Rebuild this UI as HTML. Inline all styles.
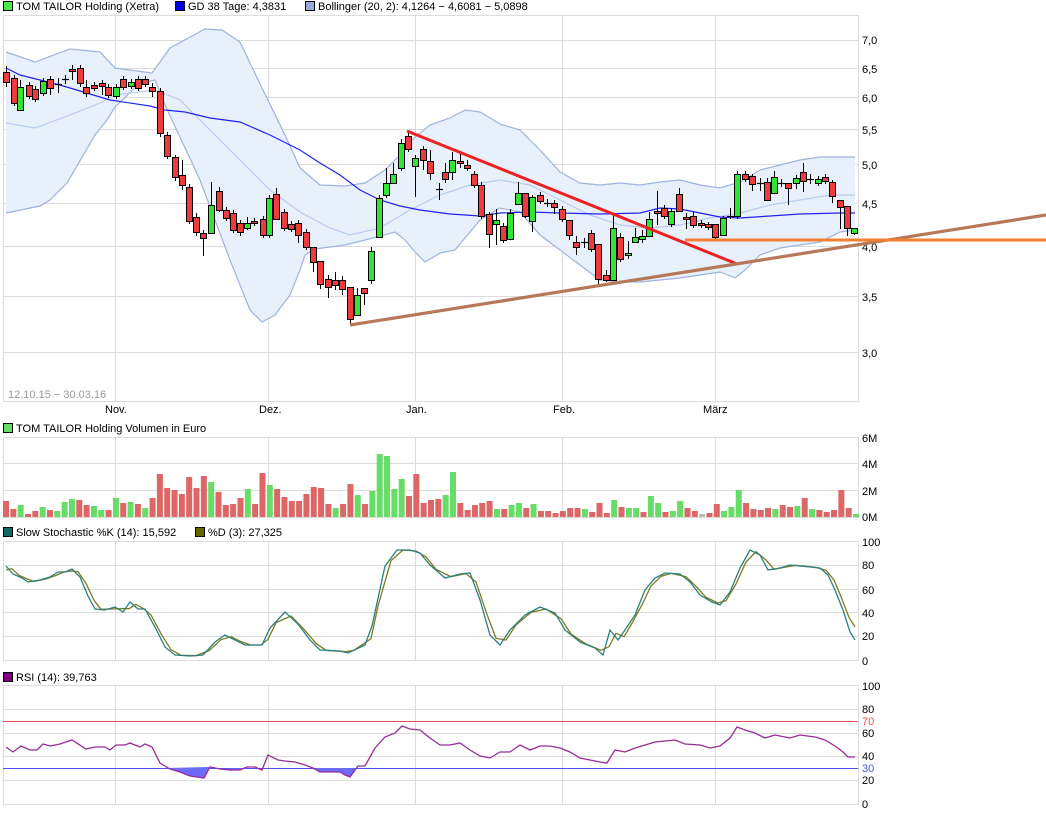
<!DOCTYPE html>
<html><head><meta charset="utf-8"><style>
body{margin:0;background:#fff;width:1046px;height:814px;overflow:hidden}
svg{display:block;font-family:"Liberation Sans",sans-serif;font-size:11px}
</style></head><body>
<svg id="s" width="1046" height="814" xmlns="http://www.w3.org/2000/svg">
<g id="grid" stroke="#dcdcdc" stroke-width="1" fill="none" shape-rendering="crispEdges">
<rect x="3.5" y="15.5" width="855" height="386"/>
<path d="M3 40.5H858M3 68.5H858M3 97.5H858M3 129.5H858M3 164.5H858M3 203.5H858M3 246.5H858M3 296.5H858M3 352.5H858"/>
<path d="M115.5 15V401M268.5 15V401M415.5 15V401M562.5 15V401M715.5 15V401"/>
<rect x="3.5" y="437.5" width="855" height="80"/>
<path d="M3 463.5H858M3 490.5H858M115.5 437V517M268.5 437V517M415.5 437V517M562.5 437V517M715.5 437V517"/>
<rect x="3.5" y="541.5" width="855" height="119"/>
<path d="M3 565.5H858M3 589.5H858M3 612.5H858M3 636.5H858M115.5 541V660M268.5 541V660M415.5 541V660M562.5 541V660M715.5 541V660"/>
<rect x="3.5" y="685.5" width="855" height="119"/>
<path d="M3 709.5H858M3 733.5H858M3 756.5H858M3 780.5H858M115.5 685V804M268.5 685V804M415.5 685V804M562.5 685V804M715.5 685V804"/>
</g>
<g fill="#000">
<rect x="3.5" y="1.5" width="9" height="9" fill="#44ee44" stroke="#000"/><text x="16" y="10">TOM TAILOR Holding (Xetra)</text>
<rect x="175.5" y="1.5" width="9" height="9" fill="#0000ee" stroke="#000"/><text x="188" y="10">GD 38 Tage: 4,3831</text>
<rect x="305.5" y="1.5" width="9" height="9" fill="#99aadd" stroke="#000"/><text x="318" y="10">Bollinger (20, 2): 4,1264 − 4,6081 − 5,0898</text>
<text x="862" y="44">7,0</text><text x="862" y="73">6,5</text><text x="862" y="102">6,0</text><text x="862" y="134">5,5</text><text x="862" y="169">5,0</text><text x="862" y="208">4,5</text><text x="862" y="251">4,0</text><text x="862" y="301">3,5</text><text x="862" y="357">3,0</text>
<text x="8" y="398" fill="#999">12.10.15 − 30.03.16</text>
<text x="105" y="413">Nov.</text><text x="259" y="413">Dez.</text><text x="406" y="413">Jan.</text><text x="553" y="413">Feb.</text><text x="703" y="413">März</text>
<rect x="3.5" y="423.5" width="9" height="9" fill="#66dd66" stroke="#000"/><text x="16" y="432">TOM TAILOR Holding Volumen in Euro</text>
<text x="862" y="442">6M</text><text x="862" y="468">4M</text><text x="862" y="495">2M</text><text x="862" y="521">0M</text>
<rect x="3.5" y="527.5" width="9" height="9" fill="#116666" stroke="#000"/><text x="16" y="536">Slow Stochastic %K (14): 15,592</text>
<rect x="195.5" y="527.5" width="9" height="9" fill="#666600" stroke="#000"/><text x="208" y="536">%D (3): 27,325</text>
<text x="862" y="546">100</text><text x="862" y="569">80</text><text x="862" y="594">60</text><text x="862" y="617">40</text><text x="862" y="640">20</text><text x="862" y="665">0</text>
<rect x="3.5" y="672.5" width="9" height="9" fill="#800080" stroke="#000"/><text x="16" y="681">RSI (14): 39,763</text>
<text x="862" y="690">100</text><text x="862" y="713">80</text><text x="862" y="725" fill="#f05050">70</text><text x="862" y="737">60</text><text x="862" y="760">40</text><text x="862" y="772" fill="#5050f0">30</text><text x="862" y="784">20</text><text x="862" y="808">0</text>
</g>
<line x1="3" y1="721.5" x2="858" y2="721.5" stroke="#e05050"/>
<line x1="3" y1="768.5" x2="858" y2="768.5" stroke="#5050f0"/>
<g id="dyn"></g>
</svg>
<script>
var NS="http://www.w3.org/2000/svg",g=document.getElementById("dyn");
function el(t,a){var e=document.createElementNS(NS,t);for(var k in a)e.setAttribute(k,a[k]);g.appendChild(e);return e}
function pts(a){return a.map(function(p){return p.join(",")}).join(" ")}
var up=[[6,52],[35,62],[70,49],[100,52],[115,68],[152,73],[170,48],[205,29],[222,30],[240,42],[262,88],[285,135],[300,168],[320,185],[345,186],[365,183],[385,170],[400,155],[415,137],[430,125],[450,118],[465,110],[480,112],[500,124],[520,130],[540,150],[560,172],[580,183],[600,185],[620,183],[640,185],[660,182],[680,180],[700,185],[720,188],[740,182],[760,170],[780,165],[800,160],[820,157],[855,157]];
var lo=[[855,230],[840,232],[820,242],[800,245],[780,248],[760,255],[745,270],[735,278],[720,272],[700,275],[680,278],[660,280],[640,282],[620,282],[600,280],[580,265],[560,250],[540,235],[520,212],[500,208],[480,220],[455,250],[440,253],[425,262],[415,252],[405,240],[395,232],[380,236],[365,240],[345,245],[330,247],[315,249],[305,255],[300,270],[290,295],[275,315],[262,322],[250,310],[230,260],[200,180],[165,105],[155,80],[140,83],[115,107],[107,120],[95,135],[67,183],[50,200],[40,206],[6,213]];
el("polygon",{points:pts(up.concat(lo)),fill:"#e8f0fc",stroke:"none"});
el("polyline",{points:pts(up),fill:"none",stroke:"#9db3e0","stroke-width":1.2});
el("polyline",{points:pts(lo),fill:"none",stroke:"#9db3e0","stroke-width":1.2});
var mid=[[6,123],[35,128],[70,115],[100,103],[115,95],[155,90],[180,100],[210,130],[240,160],[270,190],[300,212],[330,228],[350,235],[380,228],[410,210],[440,195],[470,185],[500,180],[530,185],[560,200],[590,215],[620,225],[650,228],[680,225],[710,218],[740,213],[770,205],[800,200],[830,195],[855,195]];
el("polyline",{points:pts(mid),fill:"none",stroke:"#b8ccf2","stroke-width":1.2});
var gd=[[6,68],[20,75],[60,85],[110,100],[150,106],[165,110],[185,112],[210,118],[240,122],[270,135],[300,150],[320,163],[340,175],[360,190],[380,200],[400,206],[420,210],[450,214],[480,216],[500,213],[530,212],[560,213],[600,214],[640,213],[660,208],[680,209],[700,213],[720,217],[740,218],[770,216],[800,214],[840,213],[855,213]];
el("polyline",{points:pts(gd),fill:"none",stroke:"#2222ee","stroke-width":1.2});
var C=[[3,72,82,'r',66,87],[11,78,103,'r'],[17,87,110,'g',80,110],[26,85,96,'r'],[32,89,99,'r'],[40,81,93,'g'],[47,79,88,'r',76,95],[55,84,84,'d',78,93],[62,79,79,'d',75,84],[69,69,71,'r',65,80],[77,68,83,'r',65,87],[83,87,93,'r',80,97],[91,85,88,'r'],[99,83,86,'r',80,95],[105,87,95,'r'],[113,87,96,'g'],[120,79,87,'r'],[128,82,86,'g'],[135,79,88,'r'],[142,79,84,'r'],[149,87,91,'r',83,97],[157,91,133,'r',88,137],[164,135,156,'r'],[172,157,177,'r',155,181],[179,175,185,'r',160,190],[186,187,221,'r'],[193,217,232,'r',213,236],[200,233,238,'r',230,256],[208,205,233,'g',182,233],[216,191,210,'r',187,212],[223,210,218,'r'],[230,213,230,'r'],[237,223,232,'r',220,236],[244,223,228,'g',217,230],[251,221,223,'r'],[260,219,235,'r'],[266,198,235,'g'],[273,194,219,'r',188,219],[281,212,228,'r'],[288,224,229,'r'],[295,223,235,'r',220,243],[303,232,247,'r'],[310,247,262,'r',247,272],[317,261,284,'r',261,289],[325,279,287,'r',275,298],[332,280,285,'r',272,290],[339,280,289,'r',276,295],[347,287,319,'r',287,324],[354,295,315,'g',288,316],[361,288,293,'r',288,305],[368,251,280,'g',247,284],[376,198,237,'g',195,237],[383,183,195,'g',168,198],[390,174,183,'g',163,183],[398,143,168,'g',139,171],[405,136,149,'r',133,152],[412,158,166,'g',155,197],[420,149,160,'r',146,170],[427,161,173,'r',150,180],[436,189,189,'d',183,200],[442,172,179,'r',163,183],[449,160,172,'g',152,180],[457,161,163,'r',153,168],[464,165,168,'r',160,171],[471,174,185,'r'],[478,185,216,'r'],[486,214,234,'r',212,248],[493,220,224,'g',209,245],[500,226,240,'r'],[507,213,239,'g',209,240],[515,193,204,'g',182,205],[522,193,216,'r',193,218],[529,197,221,'g',195,232],[537,195,201,'r'],[544,203,203,'d',199,207],[551,203,207,'r',200,214],[559,209,219,'r'],[566,220,235,'r',220,240],[573,242,247,'r',236,255],[581,242,242,'d',238,248],[588,233,249,'r'],[595,244,279,'r',244,285],[603,275,280,'r',270,282],[610,228,280,'g',215,280],[617,237,259,'r',233,262],[625,253,255,'g',241,259],[632,237,242,'g',228,243],[639,236,239,'g',230,243],[646,219,236,'g',212,236],[654,211,213,'r',191,225],[661,208,216,'r'],[668,211,224,'g'],[676,194,211,'r',188,211],[683,217,219,'r',213,229],[690,216,225,'r',212,228],[698,223,225,'r'],[705,224,227,'r',222,230],[712,224,237,'r',224,239],[720,218,235,'g',216,236],[727,216,216,'d',208,219],[734,174,216,'g'],[742,174,179,'r'],[749,176,184,'r',174,191],[757,183,183,'d',178,191],[764,182,200,'r',178,201],[771,177,193,'g',171,193],[778,183,183,'d',179,187],[785,183,188,'r',183,205],[793,178,183,'g',175,189],[800,172,181,'r',163,192],[807,179,179,'d',174,184],[815,179,183,'g'],[822,177,181,'r'],[829,182,196,'r',180,203],[837,200,207,'r',200,229],[844,206,228,'r',206,236],[851,228,233,'g',228,235]];
var col={r:'#ee3b3b',g:'#33e533',d:'#000'};
C.forEach(function(c){var x=c[0],t=c[1],b=c[2],wt=c[4]!=null?c[4]:t-3,wb=c[5]!=null?c[5]:b+3;
el("line",{x1:x+3.5,y1:wt,x2:x+3.5,y2:wb,stroke:"#000","stroke-width":1});
if(c[3]=='d')el("line",{x1:x,y1:t+.5,x2:x+7,y2:t+.5,stroke:"#000","stroke-width":1.2});
else el("rect",{x:x+.5,y:t+.5,width:6,height:Math.max(b-t,1),fill:col[c[3]],stroke:"#000","stroke-width":1});});
el("line",{x1:407,y1:131,x2:737,y2:264,stroke:"#ee2222","stroke-width":3});
el("line",{x1:350,y1:325,x2:1046,y2:215,stroke:"#b5795a","stroke-width":3.2});
el("line",{x1:685,y1:240,x2:1046,y2:240,stroke:"#f28030","stroke-width":3});
var V=[[16,'r'],[8,'r'],[12,'g'],[3,'r'],[6,'r'],[10,'g'],[7,'r'],[6,'g'],[15,'g'],[18,'g'],[17,'r'],[12,'r'],[11,'g'],[7,'g'],[7,'r'],[19,'g'],[14,'r'],[15,'g'],[13,'r'],[9,'g'],[19,'r'],[43,'r'],[29,'r'],[27,'r'],[23,'r'],[40,'r'],[29,'r'],[41,'r'],[35,'g'],[25,'r'],[12,'r'],[13,'r'],[19,'r'],[28,'g'],[13,'r'],[44,'r'],[32,'g'],[28,'r'],[20,'r'],[16,'r'],[16,'r'],[23,'r'],[30,'r'],[29,'r'],[13,'r'],[9,'g'],[13,'r'],[33,'r'],[22,'g'],[13,'r'],[26,'g'],[63,'g'],[61,'g'],[28,'g'],[38,'g'],[21,'r'],[43,'r'],[14,'r'],[17,'r'],[18,'r'],[22,'g'],[45,'g'],[14,'r'],[7,'r'],[12,'r'],[14,'r'],[16,'r'],[8,'g'],
[8,'r'],[12,'g'],[14,'g'],[9,'r'],[13,'g'],[6,'r'],[6,'r'],[4,'r'],[6,'r'],[9,'r'],[9,'r'],[8,'g'],[5,'r'],[14,'r'],[4,'r'],[17,'g'],[10,'r'],[9,'g'],[9,'g'],[5,'r'],[21,'g'],[14,'g'],[5,'r'],[6,'g'],[16,'g'],[9,'r'],[6,'r'],[3,'x'],[4,'r'],[13,'r'],[6,'g'],[10,'g'],[27,'g'],[14,'r'],[8,'r'],[7,'r'],[9,'r'],[8,'g'],[12,'r'],[10,'r'],[11,'g'],[19,'r'],[8,'g'],[7,'r'],[5,'r'],[7,'r'],[27,'r'],[9,'r'],[3,'g']];
var vc={r:'#dd6666',g:'#66dd66',x:'#bbbbbb'},n=V.length;
V.forEach(function(v,i){var x=3+i*(850/(n-1));el("rect",{x:x,y:517-v[0],width:6,height:v[0],fill:vc[v[1]]});});
var K=[[6,566],[13,574],[22,578],[28,582],[40,580],[50,577],[58,572],[65,572],[72,569],[80,577],[88,596],[95,609],[105,610],[115,607],[123,612],[130,602],[138,609],[145,609],[155,627],[165,647],[175,655],[190,656],[203,655],[215,642],[225,635],[235,640],[245,645],[255,645],[262,645],[270,628],[285,612],[298,624],[310,640],[320,650],[340,651],[348,653],[365,645],[372,626],[385,566],[397,550],[410,550],[420,553],[430,565],[445,578],[460,574],[470,573],[480,600],[490,635],[500,645],[510,630],[525,615],[540,607],[555,613],[565,630],[580,642],[595,648],[603,655],[610,630],[618,640],[625,630],[635,615],[645,590],[655,578],[665,573],[680,574],[690,582],[700,595],[712,602],[720,605],[730,592],[740,568],[750,550],[760,555],[768,570],[780,568],[790,565],[800,566],[810,567],[820,568],[828,575],[835,590],[843,610],[850,632],[855,640]];
var D=[[6,570]];for(var i=1;i<K.length;i++){var a=K[i-1],b=K[i];if(a[0]+6<=855)D.push([a[0]+6,(a[1]*2+b[1])/3]);}D.push([855,627]);
el("polyline",{points:pts(D),fill:"none",stroke:"#807a20","stroke-width":1.3});
el("polyline",{points:pts(K),fill:"none",stroke:"#2a8080","stroke-width":1.3});
var R=[[6,747],[13,752],[21,746],[30,750],[37,750],[43,744],[50,746],[60,744],[72,740],[86,749],[95,747],[105,747],[110,750],[116,745],[125,745],[130,743],[140,747],[145,744],[152,747],[160,763],[170,769],[180,772],[190,776],[204,778],[210,767],[220,769],[230,770],[240,770],[247,767],[255,767],[262,770],[268,755],[278,760],[285,761],[295,762],[305,765],[313,768],[320,772],[330,772],[340,772],[345,775],[350,777],[358,766],[365,766],[375,748],[385,737],[395,733],[402,726],[410,729],[420,730],[430,738],[440,745],[450,745],[460,743],[470,750],[480,756],[490,758],[500,752],[510,752],[520,745],[530,750],[540,746],[550,746],[560,748],[570,752],[580,758],[590,760],[600,762],[607,763],[615,750],[625,752],[635,748],[645,745],[655,742],[665,741],[675,740],[685,744],[700,745],[710,748],[720,746],[730,738],[737,727],[745,730],[755,733],[765,738],[775,735],[790,738],[800,735],[815,737],[825,740],[835,746],[843,752],[848,757],[855,757]];
el("polygon",{points:"166,768 170,769 180,772 190,776 204,778 210,767 166,768",fill:"#6b6bf5"});
el("polygon",{points:"220,769 230,770 240,770 243,768",fill:"#6b6bf5"});
el("polygon",{points:"313,768 320,772 330,772 340,772 345,775 350,777 356,768",fill:"#6b6bf5"});
el("polyline",{points:pts(R),fill:"none",stroke:"#9a2a9a","stroke-width":1.3});
</script>
</body></html>
